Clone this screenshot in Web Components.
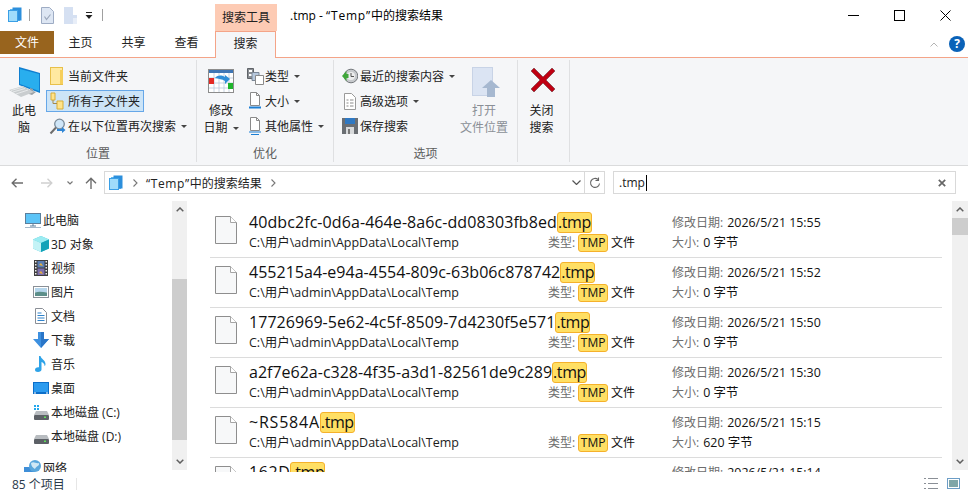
<!DOCTYPE html>
<html lang="zh">
<head>
<meta charset="utf-8">
<title>.tmp - “Temp”中的搜索结果</title>
<style>
  html, body { margin: 0; height: 100%; background: #fff; overflow: hidden; }
  body { font: 12px "Open Sans", "Noto Sans CJK SC", sans-serif; color: #000; }
  .q { letter-spacing: .8px; }
</style>
</head>
<body>
<win-explorer>
  <title-bar slot="top">.tmp - <span class="q">“Temp”</span>中的搜索结果</title-bar>
  <tab-strip slot="top"></tab-strip>
  <search-ribbon slot="top"></search-ribbon>
  <address-row slot="top"></address-row>

  <nav-pane slot="nav">
    <nav-item icon="navpc" root>此电脑</nav-item>
    <nav-item icon="cube">3D 对象</nav-item>
    <nav-item icon="film">视频</nav-item>
    <nav-item icon="pic">图片</nav-item>
    <nav-item icon="docs">文档</nav-item>
    <nav-item icon="down">下载</nav-item>
    <nav-item icon="music">音乐</nav-item>
    <nav-item icon="desk">桌面</nav-item>
    <nav-item icon="diskc">本地磁盘 (C:)</nav-item>
    <nav-item icon="disk">本地磁盘 (D:)</nav-item>
    <nav-item icon="net" root class="gap">网络</nav-item>
  </nav-pane>

  <result-list slot="main">
    <result-row date="2026/5/21 15:55" size="0 字节">40dbc2fc-0d6a-464e-8a6c-dd08303fb8ed<search-hit>.tmp</search-hit></result-row>
    <result-row style="--ls:.025px" date="2026/5/21 15:52" size="0 字节">455215a4-e94a-4554-809c-63b06c878742<search-hit>.tmp</search-hit></result-row>
    <result-row style="--ls:.05px" date="2026/5/21 15:50" size="0 字节">17726969-5e62-4c5f-8509-7d4230f5e571<search-hit>.tmp</search-hit></result-row>
    <result-row style="--ls:0px" date="2026/5/21 15:30" size="0 字节">a2f7e62a-c328-4f35-a3d1-82561de9c289<search-hit>.tmp</search-hit></result-row>
    <result-row style="--ls:.78px" date="2026/5/21 15:15" size="620 字节">~RS584A<search-hit>.tmp</search-hit></result-row>
    <result-row style="--ls:.58px" date="2026/5/21 15:14" size="0 字节">162D<search-hit>.tmp</search-hit></result-row>
  </result-list>

  <status-bar slot="bottom">85 个项目</status-bar>
</win-explorer>

<script>
const ICONS = {
  stack: [16, 16, `<rect x="1" y="3" width="10" height="12" fill="#2f9be8"/><rect x="3" y="2" width="10" height="12" fill="#5cb8f2"/><rect x="5.500" y=".5" width="9" height="13" fill="#2c8fdc"/><rect x="1.500" y="3.500" width="9" height="11" fill="#9fdcfb" stroke="#3a9fe6"/>`],
  qcheck: [13, 17, `<path d="M.5.5h8l4 4v12H.5z" fill="#dde6f3" stroke="#9eacc4"/><path d="M3.500 9.500l2 3 4-5" fill="none" stroke="#9aa6ba" stroke-width="1.200"/>`],
  qdoc: [13, 17, `<path d="M0 0h9l0 8 4 0v9H0z" fill="#d5e0f2"/><path d="M9 11h4v6H9z" fill="#e8eef8"/>`],
  qarrow: [8, 7, `<path d="M1 .5h6" stroke="#222"/><path d="M.5 3h7L4 7z" fill="#222"/>`],
  pc: [33, 32, `<path d="M11 1l21 6v20L11 19z" fill="#0f7fd0"/><path d="M12 3l19 5v17L12 18z" fill="#29aeee"/><path d="M22 22v4l-4 1 6 2 4-3-3-1v-2z" fill="#9aa1a6"/><path d="M1 24l14-4 11 6-13 5z" fill="#c9cdcf"/><path d="M3 24.500l12-3.500M5 26l12-3.500M8 28l12-4" stroke="#eef0f1" stroke-width=".8"/>`],
  folder: [14, 18, `<rect x=".5" y=".5" width="12" height="17" fill="#ffe9a0" stroke="#e8c04a"/><path d="M10 3h3v14h-3z" fill="#f6cf5c"/>`],
  subf: [14, 18, `<path d="M1 1h4v7H1z" fill="#ffe38a" stroke="#d8ad37"/><path d="M7 9h6v8H7z" fill="#ffe38a" stroke="#d8ad37"/><path d="M3 8v3.500h4" fill="none" stroke="#a5894a"/>`],
  again: [17, 17, `<circle cx="10.500" cy="6" r="4.800" fill="#cfe6f8" stroke="#7a8b9a" stroke-width="1.300"/><path d="M7 9.500L1.500 15.500" stroke="#6d6d6d" stroke-width="2"/><path d="M8 11h5V9l3.500 3-3.500 3v-2H8z" fill="#2f86d6"/>`],
  cal: [26, 24, `<rect x=".5" y=".5" width="25" height="23" fill="#fff" stroke="#8c8c8c"/><rect x="1" y="1" width="24" height="3" fill="#3f76b5"/><path d="M1 9h24M1 14h24M1 19h24M6 4v19M11 4v19M16 4v19M21 4v19" stroke="#b9c9dc" stroke-width=".8"/><rect x="1" y="9" width="5" height="6" fill="#e42b25"/><rect x="20" y="14" width="5" height="6" fill="#1fb52c"/><path d="M7 9c3-3 6-3 10-1V6l5 4-5 5v-3c-3-2-6-2-10-3z" fill="#2f8ed8"/>`],
  kind: [17, 17, `<path d="M.5.5h6v10h-6z" fill="#8b8f94" stroke="#5f6368"/><path d="M2 2h3v2H2zM2 6h3v2H2z" fill="#fff"/><path d="M5 4.500h7v8H5z" fill="#b7c8dd" stroke="#7b8796"/><path d="M8.500 7.500h8v9h-8z" fill="#fff" stroke="#8a8a8a"/>`],
  dsize: [12, 18, `<path d="M1.500.5h6l3 3v10h-9z" fill="#fff" stroke="#8a8a8a"/><path d="M7.500.5v3h3" fill="none" stroke="#8a8a8a"/><path d="M0 15.500h12" stroke="#1c7fd4" stroke-width="2"/>`],
  dprops: [12, 18, `<path d="M1.500.5h6l3 3v10h-9z" fill="#fff" stroke="#8a8a8a"/><path d="M7.500.5v3h3" fill="none" stroke="#8a8a8a"/><path d="M0 15h12M2 17.500h8" stroke="#1c7fd4"/>`],
  recent: [16, 16, `<circle cx="9" cy="8" r="6.800" fill="#c6c9cc" stroke="#75797d"/><circle cx="9" cy="8" r="4" fill="#eceded"/><path d="M9 5v3.500h3" fill="none" stroke="#555"/><path d="M0 8l4.500-5v3h2v4h-2v3z" fill="#3fa63a"/>`],
  adv: [12, 17, `<path d="M.5.500h7l4 4v12H.5z" fill="#fff" stroke="#9a9a9a"/><path d="M2.500 7h2M6 7h3.500M2.500 10h2M6 10h3.500M2.500 13h2M6 13h3.500" stroke="#8a8a8a"/>`],
  save: [16, 16, `<rect width="16" height="16" fill="#6a6e73"/><rect x="3" y="0" width="10" height="6" fill="#2f78c2"/><rect x="4" y="9" width="8" height="7" fill="#d8dadc"/><rect x="6" y="11" width="2" height="5" fill="#777"/>`],
  open: [28, 30, `<rect x=".5" y=".5" width="20" height="28" fill="#dbe4f3" stroke="#c8d3e6"/><path d="M19 13l9 8h-5v9h-8v-9h-5z" fill="#a6b8d0"/>`],
  bigx: [26, 26, `<path d="M4 1l9 9 9-9 3 3-9 9 9 9-3 3-9-9-9 9-3-3 9-9-9-9z" fill="#bf0012" stroke="#7c4148" stroke-width=".7"/>`],
  file: [22, 28, `<path d="M.5.5h15l6 6v21H.5z" fill="#f7f8f9" stroke="#8e8e8e"/><path d="M15.500.5v6h6" fill="#fff" stroke="#a5a5a5"/>`],
  navpc: [16, 16, `<rect x=".5" y="1.500" width="15" height="10" fill="#5cc4f7" stroke="#5b7f9c"/><path d="M5 14h6M8 12v2" stroke="#5b7f9c"/><path d="M0 15.500h16" stroke="#a5b8c8"/>`],
  cube: [16, 16, `<path d="M8 0l8 3.500v9L8 16 0 12.500v-9z" fill="#46c6d6"/><path d="M8 0l8 3.500L8 7 0 3.500z" fill="#9cecf2"/><path d="M0 3.500L8 7v9L0 12.500z" fill="#c4f3f6"/><path d="M8 7l8-3.500v9L8 16z" fill="#13a2b8"/>`],
  film: [14, 16, `<rect width="14" height="16" fill="#3d3d3d"/><path d="M1 1h1.500v1.500H1zM1 4h1.500v1.500H1zM1 7h1.500v1.500H1zM1 10h1.500v1.500H1zM1 13h1.500v1.500H1zM11.500 1H13v1.500h-1.500zM11.500 4H13v1.500h-1.500zM11.500 7H13v1.500h-1.500zM11.500 10H13v1.500h-1.500zM11.500 13H13v1.500h-1.500z" fill="#eee"/><rect x="3.500" y="1" width="7" height="6.500" fill="#5b7fb5"/><rect x="3.500" y="8.500" width="7" height="6.500" fill="#7d6fae"/><path d="M5 5l2-2 2 3zM5 13l2-2 2 3z" fill="#e8b23c"/>`],
  pic: [16, 12, `<rect x=".5" y=".5" width="15" height="11" fill="#fff" stroke="#8a9097"/><rect x="2" y="2" width="12" height="4.500" fill="#b6d6ec"/><path d="M2 6.500c4-1.500 8-.5 12 0V10H2z" fill="#5c8f8a"/>`],
  docs: [12, 16, `<path d="M.5.500h7l4 4v11H.5z" fill="#fff" stroke="#8a8f96"/><path d="M2.500 5h4M2.500 7.500h7M2.500 10h7M2.500 12.500h7" stroke="#2f83cc"/>`],
  down: [16, 16, `<path d="M5 0h6v7h5l-8 9-8-9h5z" fill="#3d90e0"/><path d="M8 0h3v7h5l-8 9z" fill="#2a76c8"/>`],
  music: [12, 16, `<path d="M4 0h1.500c.5 3 5 4 5 8 0 1-.5 2-1 2 .3-2-1.500-3.500-3-4v7.500C6.500 15 5 16 3 16s-3-1-3-2.300S1.500 11 4 11.300z" fill="#2ea3e8"/>`],
  desk: [16, 12, `<rect width="16" height="12" fill="#0c6ec9"/><rect x="1" y="1" width="14" height="9" fill="#2c9bef"/><rect x="1" y="10.500" width="2" height="1" fill="#fff"/><rect x="13" y="10.500" width="2" height="1" fill="#fff"/>`],
  diskc: [16, 16, `<path d="M1 1h2v2H1zM4 1h2v2H4zM1 4h2v2H1zM4 4h2v2H4z" fill="#22a8ee"/><path d="M3 7h11l2 4H1z" fill="#b8bcc0"/><rect x="1" y="11" width="15" height="5" rx="1" fill="#5c6066"/><rect x="11" y="12.500" width="2" height="1.500" fill="#5ee05a"/>`],
  disk: [16, 16, `<path d="M3 7h11l2 4H1z" fill="#b8bcc0"/><rect x="1" y="11" width="15" height="5" rx="1" fill="#5c6066"/><rect x="11" y="12.500" width="2" height="1.500" fill="#5ee05a"/>`],
  net: [18, 16, `<rect y="7" width="11" height="9" fill="#3f8fd8"/><circle cx="11" cy="6" r="6" fill="#5aa7dc"/><path d="M7 3c3-2 5 1 8 0 1 3-3 3-4 6-2-1-4-3-4-6z" fill="#cfe8f5"/>`],
  viewlist: [14, 11, `<path d="M0 .5h2M4 .5h10M0 5.500h2M4 5.500h10M0 10.500h2M4 10.500h10" stroke="#8a8f96"/>`],
  viewpic: [13, 11, `<rect x=".5" y=".5" width="12" height="10" fill="#fff" stroke="#6c9dc6"/><rect x="2" y="2" width="9" height="7" fill="#7fa6a8"/>`],
};

customElements.define("x-icon", class extends HTMLElement {
  connectedCallback() {
    const [w, h, body] = ICONS[this.getAttribute("name")];
    this.attachShadow({ mode: "open" }).innerHTML = `
      <style>:host { display: inline-flex; flex: none; } svg { display: block; }</style>
      <svg width="${w}" height="${h}" viewBox="0 0 ${w} ${h}">${body}</svg>`;
  }
});

customElements.define("drop-caret", class extends HTMLElement {
  connectedCallback() {
    this.attachShadow({ mode: "open" }).innerHTML = `
      <style>
        :host { display: inline-block; width: 0; height: 0; margin-left: 5px;
          border: 3px solid transparent; border-top: 3px solid #444; border-bottom: 0; vertical-align: middle; }
      </style>`;
  }
});

customElements.define("search-hit", class extends HTMLElement {
  connectedCallback() {
    this.attachShadow({ mode: "open" }).innerHTML = `
      <style>
        :host { display: inline-block; background: #ffdf63; border: 1px solid #f5b12b; border-radius: 3px;
          box-sizing: border-box; line-height: 1; }
      </style><slot></slot>`;
  }
});

customElements.define("win-explorer", class extends HTMLElement {
  connectedCallback() {
    this.attachShadow({ mode: "open" }).innerHTML = `
      <style>
        :host { display: flex; flex-direction: column; width: 968px; height: 495px; overflow: hidden; background: #fff; }
        .body { display: flex; height: 275px; flex: none; overflow: hidden; }
      </style>
      <slot name="top"></slot>
      <div class="body"><slot name="nav"></slot><slot name="main"></slot></div>
      <slot name="bottom"></slot>`;
  }
});

customElements.define("title-bar", class extends HTMLElement {
  connectedCallback() {
    this.attachShadow({ mode: "open" }).innerHTML = `
      <style>
        :host { display: flex; height: 31px; flex: none; }
        .qat { width: 215px; display: flex; align-items: center; padding: 0 0 0 7px; box-sizing: border-box; height: 30px; }
        .sep { width: 1px; height: 12px; background: #a0a0a0; }
        .tool { width: 62px; margin-top: 4px; background: #fdcbb4; text-align: center; line-height: 27px; color: #222; }
        .title { margin-left: 13px; line-height: 32px; flex: 1; }
        .btns { display: flex; width: 138px; }
        .btns div { flex: 1; display: flex; align-items: center; justify-content: center; height: 31px; }
      </style>
      <div class="qat">
        <x-icon name="stack"></x-icon><span class="sep" style="margin:0 11px 0 6px"></span>
        <x-icon name="qcheck"></x-icon><span style="width:10px"></span><x-icon name="qdoc"></x-icon>
        <span style="width:8px"></span><x-icon name="qarrow"></x-icon><span class="sep" style="margin-left:9px"></span>
      </div>
      <div class="tool">搜索工具</div>
      <div class="title"><slot></slot></div>
      <div class="btns">
        <div><svg width="11" height="11"><path d="M0 5.500h11" stroke="#000"/></svg></div>
        <div><svg width="11" height="11"><rect x=".5" y=".5" width="10" height="10" fill="none" stroke="#000"/></svg></div>
        <div><svg width="11" height="11"><path d="M.5.500l10 10M10.500.500l-10 10" stroke="#000"/></svg></div>
      </div>`;
  }
});

customElements.define("tab-strip", class extends HTMLElement {
  connectedCallback() {
    this.attachShadow({ mode: "open" }).innerHTML = `
      <style>
        :host { display: flex; height: 27px; flex: none; box-sizing: border-box; border-bottom: 1px solid #f4a488; align-items: flex-start; color: #222; }
        div { text-align: center; line-height: 24px; }
        .file { width: 54px; height: 23px; line-height: 24px; background: #98641e; color: #fff; }
        .tab { width: 53px; }
        .on { width: 61px; height: 27px; margin-left: 2px; box-sizing: border-box; background: #f5f6f8;
          border: 1px solid #f4a488; border-bottom: 0; }
        .end { flex: 1; display: flex; justify-content: flex-end; align-items: center; height: 26px; padding-right: 3px; gap: 11px; }
        .help { width: 16px; height: 16px; border-radius: 50%; background: #0a62b8; color: #fff; font: bold 12px/16px "Open Sans", sans-serif; }
      </style>
      <div class="file">文件</div><div class="tab">主页</div><div class="tab">共享</div><div class="tab">查看</div>
      <div class="on">搜索</div>
      <div class="end">
        <svg width="8" height="5"><path d="M.5 4.500l3.500-3.500 3.500 3.500" fill="none" stroke="#b4b4b4"/></svg>
        <div class="help">?</div>
      </div>`;
  }
});

customElements.define("ribbon-group", class extends HTMLElement {
  connectedCallback() {
    const w = this.getAttribute("width");
    this.attachShadow({ mode: "open" }).innerHTML = `
      <style>
        :host { display: flex; flex-direction: column; width: ${w}px; flex: none; box-sizing: border-box;
          height: 102px; border-right: 1px solid #dfe0e2; }
        .in { flex: 1; display: flex; }
        .lab { text-align: center; color: #5c5c5c; line-height: 20px; height: 18px; }
      </style>
      <div class="in"><slot></slot></div>
      <div class="lab">${this.getAttribute("label")}</div>`;
  }
});

customElements.define("rb-col", class extends HTMLElement {
  connectedCallback() {
    this.attachShadow({ mode: "open" }).innerHTML = `
      <style>:host { display: flex; flex-direction: column; gap: 3px; padding-top: 5px; }</style><slot></slot>`;
  }
});

customElements.define("rb-small", class extends HTMLElement {
  connectedCallback() {
    this.attachShadow({ mode: "open" }).innerHTML = `
      <style>
        :host { display: flex; align-items: center; height: 22px; box-sizing: border-box; color: #222; white-space: nowrap;
          border: 1px solid transparent; }
        :host([on]) { background: #cce4f7; border-color: #66a7e8; }
        .ic { display: flex; justify-content: center; flex: none; width: ${this.getAttribute("iw") || 20}px; margin-right: 1px; }
      </style>
      <span class="ic"><x-icon name="${this.getAttribute("icon")}"></x-icon></span><slot></slot>
      ${this.hasAttribute("caret") ? "<drop-caret></drop-caret>" : ""}`;
  }
});

customElements.define("rb-big", class extends HTMLElement {
  connectedCallback() {
    this.attachShadow({ mode: "open" }).innerHTML = `
      <style>
        :host { display: flex; flex-direction: column; align-items: center; width: ${this.getAttribute("width")}px;
          color: #222; line-height: 17px; text-align: center; white-space: pre-line; flex: none; }
        :host([off]) { color: #8a8f96; }
        .ic { height: 42px; display: flex; align-items: flex-start; box-sizing: border-box; padding: var(--itop, 7px) 0 0 var(--ipad, 0); }
      </style>
      <span class="ic"><x-icon name="${this.getAttribute("icon")}"></x-icon></span><div><slot></slot></div>`;
  }
});

customElements.define("search-ribbon", class extends HTMLElement {
  connectedCallback() {
    this.attachShadow({ mode: "open" }).innerHTML = `
      <style>
        :host { display: flex; height: 108px; flex: none; box-sizing: border-box; background: #f5f6f8;
          border-bottom: 1px solid #dadbdc; padding-top: 2px; }
      </style>
      <ribbon-group label="位置" width="197">
        <rb-big icon="pc" width="48" style="--itop:6px">此电
脑</rb-big>
        <rb-col style="margin-left:-2px">
          <rb-small icon="folder" iw="20">当前文件夹</rb-small>
          <rb-small icon="subf" iw="20" on style="width:98px">所有子文件夹</rb-small>
          <rb-small icon="again" iw="20" caret>在以下位置再次搜索</rb-small>
        </rb-col>
      </ribbon-group>
      <ribbon-group label="优化" width="137">
        <rb-big icon="cal" width="48" style="--itop:9px">修改
日期<drop-caret></drop-caret></rb-big>
        <rb-col>
          <rb-small icon="kind" iw="18">类型<drop-caret></drop-caret></rb-small>
          <rb-small icon="dsize" iw="18">大小<drop-caret></drop-caret></rb-small>
          <rb-small icon="dprops" iw="18">其他属性<drop-caret></drop-caret></rb-small>
        </rb-col>
      </ribbon-group>
      <ribbon-group label="选项" width="184">
        <rb-col style="padding-left:5px;width:115px;flex:none">
          <rb-small icon="recent" iw="19">最近的搜索内容<drop-caret></drop-caret></rb-small>
          <rb-small icon="adv" iw="19">高级选项<drop-caret></drop-caret></rb-small>
          <rb-small icon="save" iw="19">保存搜索</rb-small>
        </rb-col>
        <rb-big icon="open" width="60" off style="--ipad:4px;--itop:7px">打开
文件位置</rb-big>
      </ribbon-group>
      <ribbon-group label="" width="52">
        <rb-big icon="bigx" width="47" style="--ipad:3px;--itop:7px">关闭
搜索</rb-big>
      </ribbon-group>`;
  }
});

customElements.define("address-row", class extends HTMLElement {
  connectedCallback() {
    this.attachShadow({ mode: "open" }).innerHTML = `
      <style>
        :host { display: flex; align-items: flex-start; height: 31px; flex: none; box-sizing: border-box; padding: 5px 12px 3px 0; color: #222; }
        .nav { display: flex; align-items: center; height: 23px; width: 104px; flex: none; box-sizing: border-box; padding-left: 11px; }
        .box { display: flex; align-items: center; height: 23px; box-sizing: border-box; border: 1px solid #d9d9d9; }
        .addr { width: 481px; padding-left: 3px; }
        .refresh { width: 20px; height: 23px; display: flex; align-items: center; justify-content: center; margin-right: 8px; border-left: 0; }
        .find { flex: 1; padding: 0 9px 0 5px; }
        .grow { flex: 1; }
        .cur { width: 1px; height: 16px; background: #000; margin-left: 1px; }
        .q { letter-spacing: .6px; }
      </style>
      <div class="nav">
        <svg width="12" height="10"><path d="M12 5H1.500M5.500.8L1.200 5l4.300 4.200" fill="none" stroke="#6d6d6d" stroke-width="1.400"/></svg>
        <svg width="12" height="10" style="margin-left:18px"><path d="M0 5h10.500M6.500.8L10.800 5 6.500 9.200" fill="none" stroke="#d0d0d0" stroke-width="1.400"/></svg>
        <svg width="6" height="4" style="margin-left:14px"><path d="M.5.500L3 3l2.500-2.500" fill="none" stroke="#777" stroke-width="1.200"/></svg>
        <svg width="12" height="12" style="margin-left:12px"><path d="M6 12V1.500M1 6.300L6 1.200l5 5.100" fill="none" stroke="#6d6d6d" stroke-width="1.400"/></svg>
      </div>
      <div class="box addr">
        <x-icon name="stack"></x-icon>
        <svg width="5" height="8" style="margin:0 8px 0 9px"><path d="M.5.500L4 4 .5 7.500" fill="none" stroke="#777" stroke-width="1.100"/></svg>
        <span><span class="q">“Temp”</span>中的搜索结果</span>
        <svg width="5" height="8" style="margin-left:9px"><path d="M.5.500L4 4 .5 7.500" fill="none" stroke="#777" stroke-width="1.100"/></svg>
        <span class="grow"></span>
        <svg width="9" height="5" style="margin-right:3px"><path d="M.5.500l4 4 4-4" fill="none" stroke="#555" stroke-width="1.200"/></svg>
      </div>
      <div class="box refresh">
        <svg width="12" height="12"><path d="M10.500 6.500a4.500 4.500 0 1 1-1.500-4M9.500.5v3h-3" fill="none" stroke="#666" stroke-width="1.100"/></svg>
      </div>
      <div class="box find">
        <span>.tmp</span><span class="cur"></span><span class="grow"></span>
        <svg width="8" height="8"><path d="M.8.800l6.400 6.400M7.200.800L.8 7.200" stroke="#666" stroke-width="1.700"/></svg>
      </div>`;
  }
});

customElements.define("v-scroll", class extends HTMLElement {
  connectedCallback() {
    this.attachShadow({ mode: "open" }).innerHTML = `
      <style>
        :host { display: flex; flex-direction: column; width: ${this.getAttribute("width") || 16}px; flex: none; background: #f0f0f0; height: 269px; margin-top: 4px; }
        .end { height: 17px; display: flex; align-items: center; justify-content: center; flex: none; }
        .pre { height: ${this.getAttribute("before")}px; flex: none; }
        .thumb { height: ${this.getAttribute("size")}px; background: #cdcdcd; flex: none; }
        .rest { flex: 1; }
      </style>
      <div class="end"><svg width="8" height="5"><path d="M.7 4.300L4 1l3.300 3.300" fill="none" stroke="#606060" stroke-width="1.500"/></svg></div>
      <div class="pre"></div><div class="thumb"></div><div class="rest"></div>
      <div class="end"><svg width="8" height="5"><path d="M.7.700L4 4l3.300-3.300" fill="none" stroke="#606060" stroke-width="1.500"/></svg></div>`;
  }
});

customElements.define("nav-pane", class extends HTMLElement {
  connectedCallback() {
    this.attachShadow({ mode: "open" }).innerHTML = `
      <style>
        :host { display: flex; width: 188px; flex: none; box-sizing: border-box; padding-right: 1px; }
        .list { flex: 1; padding-top: 11px; overflow: hidden; }
      </style>
      <div class="list"><slot></slot></div>
      <v-scroll width="15" before="61" size="161"></v-scroll>`;
  }
});

customElements.define("nav-item", class extends HTMLElement {
  connectedCallback() {
    this.attachShadow({ mode: "open" }).innerHTML = `
      <style>
        :host { display: flex; align-items: center; height: 24px; padding-left: 30px; color: #222; white-space: nowrap; }
        :host([root]) { padding-left: 22px; }
        :host(.gap) { margin-top: 8px; }
        .ic { width: 21px; display: flex; justify-content: center; flex: none; }
      </style>
      <span class="ic"><x-icon name="${this.getAttribute("icon")}"></x-icon></span><slot></slot>`;
  }
});

customElements.define("result-list", class extends HTMLElement {
  connectedCallback() {
    this.attachShadow({ mode: "open" }).innerHTML = `
      <style>
        :host { display: flex; flex: 1; min-width: 0; }
        .list { flex: 1; padding: 11px 10px 0 22px; overflow: hidden; }
      </style>
      <div class="list"><slot></slot></div>
      <v-scroll before="0" size="17"></v-scroll>`;
  }
});

customElements.define("result-row", class extends HTMLElement {
  connectedCallback() {
    const date = this.getAttribute("date");
    const size = this.getAttribute("size");
    this.attachShadow({ mode: "open" }).innerHTML = `
      <style>
        :host { display: grid; grid-template-columns: 39px 299px 124px 1fr; grid-template-rows: 21px 18px; row-gap: 1px;
          height: 50px; box-sizing: border-box; padding-top: 4px; border-bottom: 1px solid #dcdcdc; white-space: nowrap; color: #111; }
        .ic { grid-row: 1 / 3; padding: 4px 0 0 5px; }
        .name { font-size: 16px; letter-spacing: var(--ls, .08px); line-height: 21px; grid-column: 2 / 4; }
        ::slotted(search-hit) { height: 21px; line-height: 19px; vertical-align: top; letter-spacing: -.4px; }
        .path { line-height: 18px; font-size: 12.500px; color: #1c1c1c; }
        .lab { color: #6d6d6d; }
        .cell { line-height: 18px; }
        .val { font-size: 12.400px; margin-left: 1px; }
        .hit { height: 18px; line-height: 16px; padding: 0 1.500px; vertical-align: top; }
      </style>
      <div class="ic"><x-icon name="file"></x-icon></div>
      <div class="name"><slot></slot></div>
      <div class="cell" style="padding-top:2px"><span class="lab">修改日期:</span> <span class="val">${date}</span></div>
      <div class="path">C:\\用户\\admin\\AppData\\Local\\Temp</div>
      <div class="cell"><span class="lab">类型:</span> <search-hit class="hit">TMP</search-hit> 文件</div>
      <div class="cell"><span class="lab">大小:</span> <span class="val">${size}</span></div>`;
  }
});

customElements.define("status-bar", class extends HTMLElement {
  connectedCallback() {
    this.attachShadow({ mode: "open" }).innerHTML = `
      <style>
        :host { display: flex; align-items: center; flex: 1; padding: 0 8px 0 12px; color: #2a3a4a; }
        .sep { width: 1px; height: 12px; background: #e6e6e6; margin-left: 11px; }
        .grow { flex: 1; }
      </style>
      <slot></slot><span class="sep"></span><span class="grow"></span>
      <x-icon name="viewlist"></x-icon><span style="width:9px"></span><x-icon name="viewpic"></x-icon>`;
  }
});
</script>
</body>
</html>
